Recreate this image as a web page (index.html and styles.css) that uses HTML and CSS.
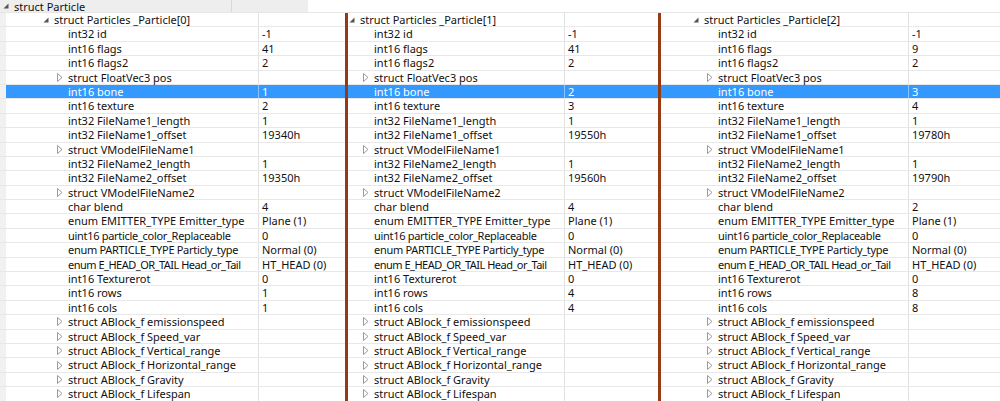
FILE: index.html
```html
<!DOCTYPE html>
<html>
<head>
<meta charset="utf-8">
<link rel="stylesheet" href="styles.css">
</head>
<body>
<div class="header">
  <div class="hdr-name"><span class="arrow hdr-arrow"><svg width="6" height="6" viewBox="0 0 6 6"><polygon points="5.5,0.5 5.5,5.5 0.5,5.5" fill="#555"/></svg></span>struct Particle</div>
  <div class="hdr-val"></div>
</div>
<div class="panels">
  <div class="panel p1">
    <div class="tree">
      <div class="row"><div class="gutter"></div><div class="name l1"><span class="arrow"><svg width="6" height="6" viewBox="0 0 6 6"><polygon points="5.5,0.5 5.5,5.5 0.5,5.5" fill="#555"/></svg></span>struct Particles _Particle[0]</div><div class="val"></div></div>
      <div class="row"><div class="gutter"></div><div class="name l2">int32 id</div><div class="val">-1</div></div>
      <div class="row"><div class="gutter"></div><div class="name l2">int16 flags</div><div class="val">41</div></div>
      <div class="row"><div class="gutter"></div><div class="name l2">int16 flags2</div><div class="val">2</div></div>
      <div class="row"><div class="gutter"></div><div class="name l2c"><span class="arrow"><svg width="6" height="9" viewBox="0 0 6 9"><polygon points="0.5,0.5 5,4.5 0.5,8.5" fill="#fff" stroke="#9a9a9a"/></svg></span>struct FloatVec3 pos</div><div class="val"></div></div>
      <div class="row sel"><div class="gutter"></div><div class="name l2">int16 bone</div><div class="val">1</div></div>
      <div class="row"><div class="gutter"></div><div class="name l2">int16 texture</div><div class="val">2</div></div>
      <div class="row"><div class="gutter"></div><div class="name l2">int32 FileName1_length</div><div class="val">1</div></div>
      <div class="row"><div class="gutter"></div><div class="name l2">int32 FileName1_offset</div><div class="val">19340h</div></div>
      <div class="row"><div class="gutter"></div><div class="name l2c"><span class="arrow"><svg width="6" height="9" viewBox="0 0 6 9"><polygon points="0.5,0.5 5,4.5 0.5,8.5" fill="#fff" stroke="#9a9a9a"/></svg></span>struct VModelFileName1</div><div class="val"></div></div>
      <div class="row"><div class="gutter"></div><div class="name l2">int32 FileName2_length</div><div class="val">1</div></div>
      <div class="row"><div class="gutter"></div><div class="name l2">int32 FileName2_offset</div><div class="val">19350h</div></div>
      <div class="row"><div class="gutter"></div><div class="name l2c"><span class="arrow"><svg width="6" height="9" viewBox="0 0 6 9"><polygon points="0.5,0.5 5,4.5 0.5,8.5" fill="#fff" stroke="#9a9a9a"/></svg></span>struct VModelFileName2</div><div class="val"></div></div>
      <div class="row"><div class="gutter"></div><div class="name l2">char blend</div><div class="val">4</div></div>
      <div class="row"><div class="gutter"></div><div class="name l2">enum EMITTER_TYPE Emitter_type</div><div class="val">Plane (1)</div></div>
      <div class="row"><div class="gutter"></div><div class="name l2 tight">uint16 particle_color_Replaceable</div><div class="val">0</div></div>
      <div class="row"><div class="gutter"></div><div class="name l2 tight">enum PARTICLE_TYPE Particly_type</div><div class="val">Normal (0)</div></div>
      <div class="row"><div class="gutter"></div><div class="name l2 tighter">enum E_HEAD_OR_TAIL Head_or_Tail</div><div class="val">HT_HEAD (0)</div></div>
      <div class="row"><div class="gutter"></div><div class="name l2">int16 Texturerot</div><div class="val">0</div></div>
      <div class="row"><div class="gutter"></div><div class="name l2">int16 rows</div><div class="val">1</div></div>
      <div class="row"><div class="gutter"></div><div class="name l2">int16 cols</div><div class="val">1</div></div>
      <div class="row"><div class="gutter"></div><div class="name l2c"><span class="arrow"><svg width="6" height="9" viewBox="0 0 6 9"><polygon points="0.5,0.5 5,4.5 0.5,8.5" fill="#fff" stroke="#9a9a9a"/></svg></span>struct ABlock_f emissionspeed</div><div class="val"></div></div>
      <div class="row"><div class="gutter"></div><div class="name l2c"><span class="arrow"><svg width="6" height="9" viewBox="0 0 6 9"><polygon points="0.5,0.5 5,4.5 0.5,8.5" fill="#fff" stroke="#9a9a9a"/></svg></span>struct ABlock_f Speed_var</div><div class="val"></div></div>
      <div class="row"><div class="gutter"></div><div class="name l2c"><span class="arrow"><svg width="6" height="9" viewBox="0 0 6 9"><polygon points="0.5,0.5 5,4.5 0.5,8.5" fill="#fff" stroke="#9a9a9a"/></svg></span>struct ABlock_f Vertical_range</div><div class="val"></div></div>
      <div class="row"><div class="gutter"></div><div class="name l2c"><span class="arrow"><svg width="6" height="9" viewBox="0 0 6 9"><polygon points="0.5,0.5 5,4.5 0.5,8.5" fill="#fff" stroke="#9a9a9a"/></svg></span>struct ABlock_f Horizontal_range</div><div class="val"></div></div>
      <div class="row"><div class="gutter"></div><div class="name l2c"><span class="arrow"><svg width="6" height="9" viewBox="0 0 6 9"><polygon points="0.5,0.5 5,4.5 0.5,8.5" fill="#fff" stroke="#9a9a9a"/></svg></span>struct ABlock_f Gravity</div><div class="val"></div></div>
      <div class="row"><div class="gutter"></div><div class="name l2c"><span class="arrow"><svg width="6" height="9" viewBox="0 0 6 9"><polygon points="0.5,0.5 5,4.5 0.5,8.5" fill="#fff" stroke="#9a9a9a"/></svg></span>struct ABlock_f Lifespan</div><div class="val"></div></div>
    </div>
  </div>
  <div class="divider"></div>
  <div class="panel p2">
    <div class="tree">
      <div class="row"><div class="gutter"></div><div class="name l1"><span class="arrow"><svg width="6" height="6" viewBox="0 0 6 6"><polygon points="5.5,0.5 5.5,5.5 0.5,5.5" fill="#555"/></svg></span>struct Particles _Particle[1]</div><div class="val"></div></div>
      <div class="row"><div class="gutter"></div><div class="name l2">int32 id</div><div class="val">-1</div></div>
      <div class="row"><div class="gutter"></div><div class="name l2">int16 flags</div><div class="val">41</div></div>
      <div class="row"><div class="gutter"></div><div class="name l2">int16 flags2</div><div class="val">2</div></div>
      <div class="row"><div class="gutter"></div><div class="name l2c"><span class="arrow"><svg width="6" height="9" viewBox="0 0 6 9"><polygon points="0.5,0.5 5,4.5 0.5,8.5" fill="#fff" stroke="#9a9a9a"/></svg></span>struct FloatVec3 pos</div><div class="val"></div></div>
      <div class="row sel"><div class="gutter"></div><div class="name l2">int16 bone</div><div class="val">2</div></div>
      <div class="row"><div class="gutter"></div><div class="name l2">int16 texture</div><div class="val">3</div></div>
      <div class="row"><div class="gutter"></div><div class="name l2">int32 FileName1_length</div><div class="val">1</div></div>
      <div class="row"><div class="gutter"></div><div class="name l2">int32 FileName1_offset</div><div class="val">19550h</div></div>
      <div class="row"><div class="gutter"></div><div class="name l2c"><span class="arrow"><svg width="6" height="9" viewBox="0 0 6 9"><polygon points="0.5,0.5 5,4.5 0.5,8.5" fill="#fff" stroke="#9a9a9a"/></svg></span>struct VModelFileName1</div><div class="val"></div></div>
      <div class="row"><div class="gutter"></div><div class="name l2">int32 FileName2_length</div><div class="val">1</div></div>
      <div class="row"><div class="gutter"></div><div class="name l2">int32 FileName2_offset</div><div class="val">19560h</div></div>
      <div class="row"><div class="gutter"></div><div class="name l2c"><span class="arrow"><svg width="6" height="9" viewBox="0 0 6 9"><polygon points="0.5,0.5 5,4.5 0.5,8.5" fill="#fff" stroke="#9a9a9a"/></svg></span>struct VModelFileName2</div><div class="val"></div></div>
      <div class="row"><div class="gutter"></div><div class="name l2">char blend</div><div class="val">4</div></div>
      <div class="row"><div class="gutter"></div><div class="name l2">enum EMITTER_TYPE Emitter_type</div><div class="val">Plane (1)</div></div>
      <div class="row"><div class="gutter"></div><div class="name l2 tight">uint16 particle_color_Replaceable</div><div class="val">0</div></div>
      <div class="row"><div class="gutter"></div><div class="name l2 tight">enum PARTICLE_TYPE Particly_type</div><div class="val">Normal (0)</div></div>
      <div class="row"><div class="gutter"></div><div class="name l2 tighter">enum E_HEAD_OR_TAIL Head_or_Tail</div><div class="val">HT_HEAD (0)</div></div>
      <div class="row"><div class="gutter"></div><div class="name l2">int16 Texturerot</div><div class="val">0</div></div>
      <div class="row"><div class="gutter"></div><div class="name l2">int16 rows</div><div class="val">4</div></div>
      <div class="row"><div class="gutter"></div><div class="name l2">int16 cols</div><div class="val">4</div></div>
      <div class="row"><div class="gutter"></div><div class="name l2c"><span class="arrow"><svg width="6" height="9" viewBox="0 0 6 9"><polygon points="0.5,0.5 5,4.5 0.5,8.5" fill="#fff" stroke="#9a9a9a"/></svg></span>struct ABlock_f emissionspeed</div><div class="val"></div></div>
      <div class="row"><div class="gutter"></div><div class="name l2c"><span class="arrow"><svg width="6" height="9" viewBox="0 0 6 9"><polygon points="0.5,0.5 5,4.5 0.5,8.5" fill="#fff" stroke="#9a9a9a"/></svg></span>struct ABlock_f Speed_var</div><div class="val"></div></div>
      <div class="row"><div class="gutter"></div><div class="name l2c"><span class="arrow"><svg width="6" height="9" viewBox="0 0 6 9"><polygon points="0.5,0.5 5,4.5 0.5,8.5" fill="#fff" stroke="#9a9a9a"/></svg></span>struct ABlock_f Vertical_range</div><div class="val"></div></div>
      <div class="row"><div class="gutter"></div><div class="name l2c"><span class="arrow"><svg width="6" height="9" viewBox="0 0 6 9"><polygon points="0.5,0.5 5,4.5 0.5,8.5" fill="#fff" stroke="#9a9a9a"/></svg></span>struct ABlock_f Horizontal_range</div><div class="val"></div></div>
      <div class="row"><div class="gutter"></div><div class="name l2c"><span class="arrow"><svg width="6" height="9" viewBox="0 0 6 9"><polygon points="0.5,0.5 5,4.5 0.5,8.5" fill="#fff" stroke="#9a9a9a"/></svg></span>struct ABlock_f Gravity</div><div class="val"></div></div>
      <div class="row"><div class="gutter"></div><div class="name l2c"><span class="arrow"><svg width="6" height="9" viewBox="0 0 6 9"><polygon points="0.5,0.5 5,4.5 0.5,8.5" fill="#fff" stroke="#9a9a9a"/></svg></span>struct ABlock_f Lifespan</div><div class="val"></div></div>
    </div>
  </div>
  <div class="divider"></div>
  <div class="panel p3">
    <div class="tree">
      <div class="row"><div class="gutter"></div><div class="name l1"><span class="arrow"><svg width="6" height="6" viewBox="0 0 6 6"><polygon points="5.5,0.5 5.5,5.5 0.5,5.5" fill="#555"/></svg></span>struct Particles _Particle[2]</div><div class="val"></div></div>
      <div class="row"><div class="gutter"></div><div class="name l2">int32 id</div><div class="val">-1</div></div>
      <div class="row"><div class="gutter"></div><div class="name l2">int16 flags</div><div class="val">9</div></div>
      <div class="row"><div class="gutter"></div><div class="name l2">int16 flags2</div><div class="val">2</div></div>
      <div class="row"><div class="gutter"></div><div class="name l2c"><span class="arrow"><svg width="6" height="9" viewBox="0 0 6 9"><polygon points="0.5,0.5 5,4.5 0.5,8.5" fill="#fff" stroke="#9a9a9a"/></svg></span>struct FloatVec3 pos</div><div class="val"></div></div>
      <div class="row sel"><div class="gutter"></div><div class="name l2">int16 bone</div><div class="val">3</div></div>
      <div class="row"><div class="gutter"></div><div class="name l2">int16 texture</div><div class="val">4</div></div>
      <div class="row"><div class="gutter"></div><div class="name l2">int32 FileName1_length</div><div class="val">1</div></div>
      <div class="row"><div class="gutter"></div><div class="name l2">int32 FileName1_offset</div><div class="val">19780h</div></div>
      <div class="row"><div class="gutter"></div><div class="name l2c"><span class="arrow"><svg width="6" height="9" viewBox="0 0 6 9"><polygon points="0.5,0.5 5,4.5 0.5,8.5" fill="#fff" stroke="#9a9a9a"/></svg></span>struct VModelFileName1</div><div class="val"></div></div>
      <div class="row"><div class="gutter"></div><div class="name l2">int32 FileName2_length</div><div class="val">1</div></div>
      <div class="row"><div class="gutter"></div><div class="name l2">int32 FileName2_offset</div><div class="val">19790h</div></div>
      <div class="row"><div class="gutter"></div><div class="name l2c"><span class="arrow"><svg width="6" height="9" viewBox="0 0 6 9"><polygon points="0.5,0.5 5,4.5 0.5,8.5" fill="#fff" stroke="#9a9a9a"/></svg></span>struct VModelFileName2</div><div class="val"></div></div>
      <div class="row"><div class="gutter"></div><div class="name l2">char blend</div><div class="val">2</div></div>
      <div class="row"><div class="gutter"></div><div class="name l2">enum EMITTER_TYPE Emitter_type</div><div class="val">Plane (1)</div></div>
      <div class="row"><div class="gutter"></div><div class="name l2 tight">uint16 particle_color_Replaceable</div><div class="val">0</div></div>
      <div class="row"><div class="gutter"></div><div class="name l2 tight">enum PARTICLE_TYPE Particly_type</div><div class="val">Normal (0)</div></div>
      <div class="row"><div class="gutter"></div><div class="name l2 tighter">enum E_HEAD_OR_TAIL Head_or_Tail</div><div class="val">HT_HEAD (0)</div></div>
      <div class="row"><div class="gutter"></div><div class="name l2">int16 Texturerot</div><div class="val">0</div></div>
      <div class="row"><div class="gutter"></div><div class="name l2">int16 rows</div><div class="val">8</div></div>
      <div class="row"><div class="gutter"></div><div class="name l2">int16 cols</div><div class="val">8</div></div>
      <div class="row"><div class="gutter"></div><div class="name l2c"><span class="arrow"><svg width="6" height="9" viewBox="0 0 6 9"><polygon points="0.5,0.5 5,4.5 0.5,8.5" fill="#fff" stroke="#9a9a9a"/></svg></span>struct ABlock_f emissionspeed</div><div class="val"></div></div>
      <div class="row"><div class="gutter"></div><div class="name l2c"><span class="arrow"><svg width="6" height="9" viewBox="0 0 6 9"><polygon points="0.5,0.5 5,4.5 0.5,8.5" fill="#fff" stroke="#9a9a9a"/></svg></span>struct ABlock_f Speed_var</div><div class="val"></div></div>
      <div class="row"><div class="gutter"></div><div class="name l2c"><span class="arrow"><svg width="6" height="9" viewBox="0 0 6 9"><polygon points="0.5,0.5 5,4.5 0.5,8.5" fill="#fff" stroke="#9a9a9a"/></svg></span>struct ABlock_f Vertical_range</div><div class="val"></div></div>
      <div class="row"><div class="gutter"></div><div class="name l2c"><span class="arrow"><svg width="6" height="9" viewBox="0 0 6 9"><polygon points="0.5,0.5 5,4.5 0.5,8.5" fill="#fff" stroke="#9a9a9a"/></svg></span>struct ABlock_f Horizontal_range</div><div class="val"></div></div>
      <div class="row"><div class="gutter"></div><div class="name l2c"><span class="arrow"><svg width="6" height="9" viewBox="0 0 6 9"><polygon points="0.5,0.5 5,4.5 0.5,8.5" fill="#fff" stroke="#9a9a9a"/></svg></span>struct ABlock_f Gravity</div><div class="val"></div></div>
      <div class="row"><div class="gutter"></div><div class="name l2c"><span class="arrow"><svg width="6" height="9" viewBox="0 0 6 9"><polygon points="0.5,0.5 5,4.5 0.5,8.5" fill="#fff" stroke="#9a9a9a"/></svg></span>struct ABlock_f Lifespan</div><div class="val"></div></div>
    </div>
  </div>
</div>
</body>
</html>
```

FILE: styles.css
```css
* { box-sizing: border-box; }
html, body { margin: 0; padding: 0; background: #fff; }
body {
  width: 1000px;
  height: 401px;
  overflow: hidden;
  font-family: "Noto Sans", "DejaVu Sans", sans-serif;
  font-size: 11px;
  color: #111;
}
.header {
  display: flex;
  height: 13px;
  border-bottom: 1px solid #e6e6e6;
}
.hdr-name {
  width: 232px;
  height: 12px;
  background: #eeeeee;
  border-right: 1px solid #d9d9d9;
  line-height: 11px;
  padding-left: 3px;
  display: flex;
  align-items: center;
  white-space: nowrap;
}
.hdr-val {
  width: 76px;
  height: 12px;
  background: #eeeeee;
}
.hdr-arrow { width: 10px; }
.panels {
  display: flex;
  height: 388px;
}
.panel {
  overflow: hidden;
  height: 100%;
}
.p1 { width: 345px; }
.p2 { width: 310px; }
.p3 { flex: 1; }
.divider {
  width: 3px;
  background: #953a12;
}
.tree { width: 420px; }
.p2 .tree { margin-left: -42px; }
.p3 .tree { margin-left: -11px; }
.row {
  display: flex;
  height: 14.4px;
  border-bottom: 1px solid #e8e8e8;
  line-height: 13.4px;
  white-space: nowrap;
}
.gutter {
  width: 6px;
  background: #f1f1f1;
  flex: none;
}
.name {
  width: 252px;
  flex: none;
  display: flex;
  align-items: center;
}
.name.l1 { padding-left: 37px; }
.name.l2 { padding-left: 62px; }
.name.l2c { padding-left: 51px; }
.name.tight { letter-spacing: -0.3px; }
.name.tighter { letter-spacing: -0.5px; }
.arrow {
  display: inline-flex;
  width: 11px;
  align-items: center;
  flex: none;
}
.val {
  flex: 1;
  border-left: 1px solid #e2e2e2;
  padding-left: 3px;
}
.row.sel .name, .row.sel .val {
  background: #3399ff;
  color: #fff;
}
.row.sel .val { border-left-color: #8cc4ff; }
```
